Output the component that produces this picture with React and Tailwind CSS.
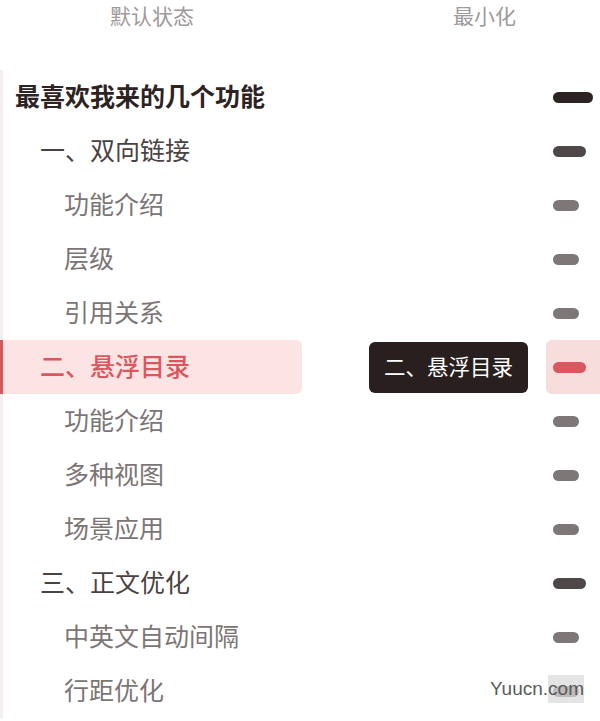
const ITEMS = [
  { text: '最喜欢我来的几个功能', level: 1 },
  { text: '一、双向链接', level: 2 },
  { text: '功能介绍', level: 3 },
  { text: '层级', level: 3 },
  { text: '引用关系', level: 3 },
  { text: '二、悬浮目录', level: 2, active: true },
  { text: '功能介绍', level: 3 },
  { text: '多种视图', level: 3 },
  { text: '场景应用', level: 3 },
  { text: '三、正文优化', level: 2 },
  { text: '中英文自动间隔', level: 3 },
  { text: '行距优化', level: 3 },
];

const TEXT = {
  1: 'pl-[12px] text-[#2d2323] font-bold',
  2: 'pl-[37px] text-[#4a4242]',
  3: 'pl-[61px] text-[#7c7575]',
};

const DASH = {
  1: 'w-[40px] bg-[#2d2323]',
  2: 'w-[33px] bg-[#4f4848]',
  3: 'w-[26px] bg-[#7d7777]',
};

export default function App() {
  return (
    <div className="relative w-[600px] h-[721px] overflow-hidden bg-white font-['Noto_Sans_CJK_SC',sans-serif]">
      {/* column captions */}
      <div className="flex h-[32px] items-center text-[21px] text-[#a09999]">
        <div className="w-[304px] text-center">默认状态</div>
        <div className="ml-[65px] w-[231px] text-center">最小化</div>
      </div>

      <div className="mt-[38px]">
        {ITEMS.map((it, i) => (
          <div key={i} className="flex h-[54px]">
            <div
              className={`w-[302px] flex items-center pb-[3px] border-l-[3px] text-[25px] leading-none rounded-r-md ${
                it.active ? 'border-[#d9575e] bg-[#fde4e4]' : 'border-[#f4eeee]'
              }`}
            >
              <span className={it.active ? 'pl-[37px] text-[#d9575e] font-medium' : TEXT[it.level]}>
                {it.text}
              </span>
            </div>
            <div className="flex-1 flex items-center justify-end pr-[18px]">
              {it.active && (
                <div className="h-[51px] w-[159px] pb-[2px] rounded-md bg-[#2a1f1f] text-white text-[21.5px] flex items-center justify-center">
                  {it.text}
                </div>
              )}
            </div>
            <div className={`w-[54px] flex items-center pl-[7px] rounded-l-md ${it.active ? 'bg-[#f8dddd]' : ''}`}>
              <div className={`h-[11px] rounded-full ${it.active ? 'w-[33px] bg-[#d9575e]' : DASH[it.level]}`} />
            </div>
          </div>
        ))}
      </div>

      {/* watermark */}
      <div className="absolute right-[16px] bottom-[18px] flex items-center">
        <span className="font-['Liberation_Sans',sans-serif] text-[19px] text-[#5a5a5a]">Yuucn.</span>
        <span className="font-['Liberation_Sans',sans-serif] text-[19px] text-[#5a5a5a] bg-[#d8d8d8]/70">com</span>
      </div>
    </div>
  );
}
